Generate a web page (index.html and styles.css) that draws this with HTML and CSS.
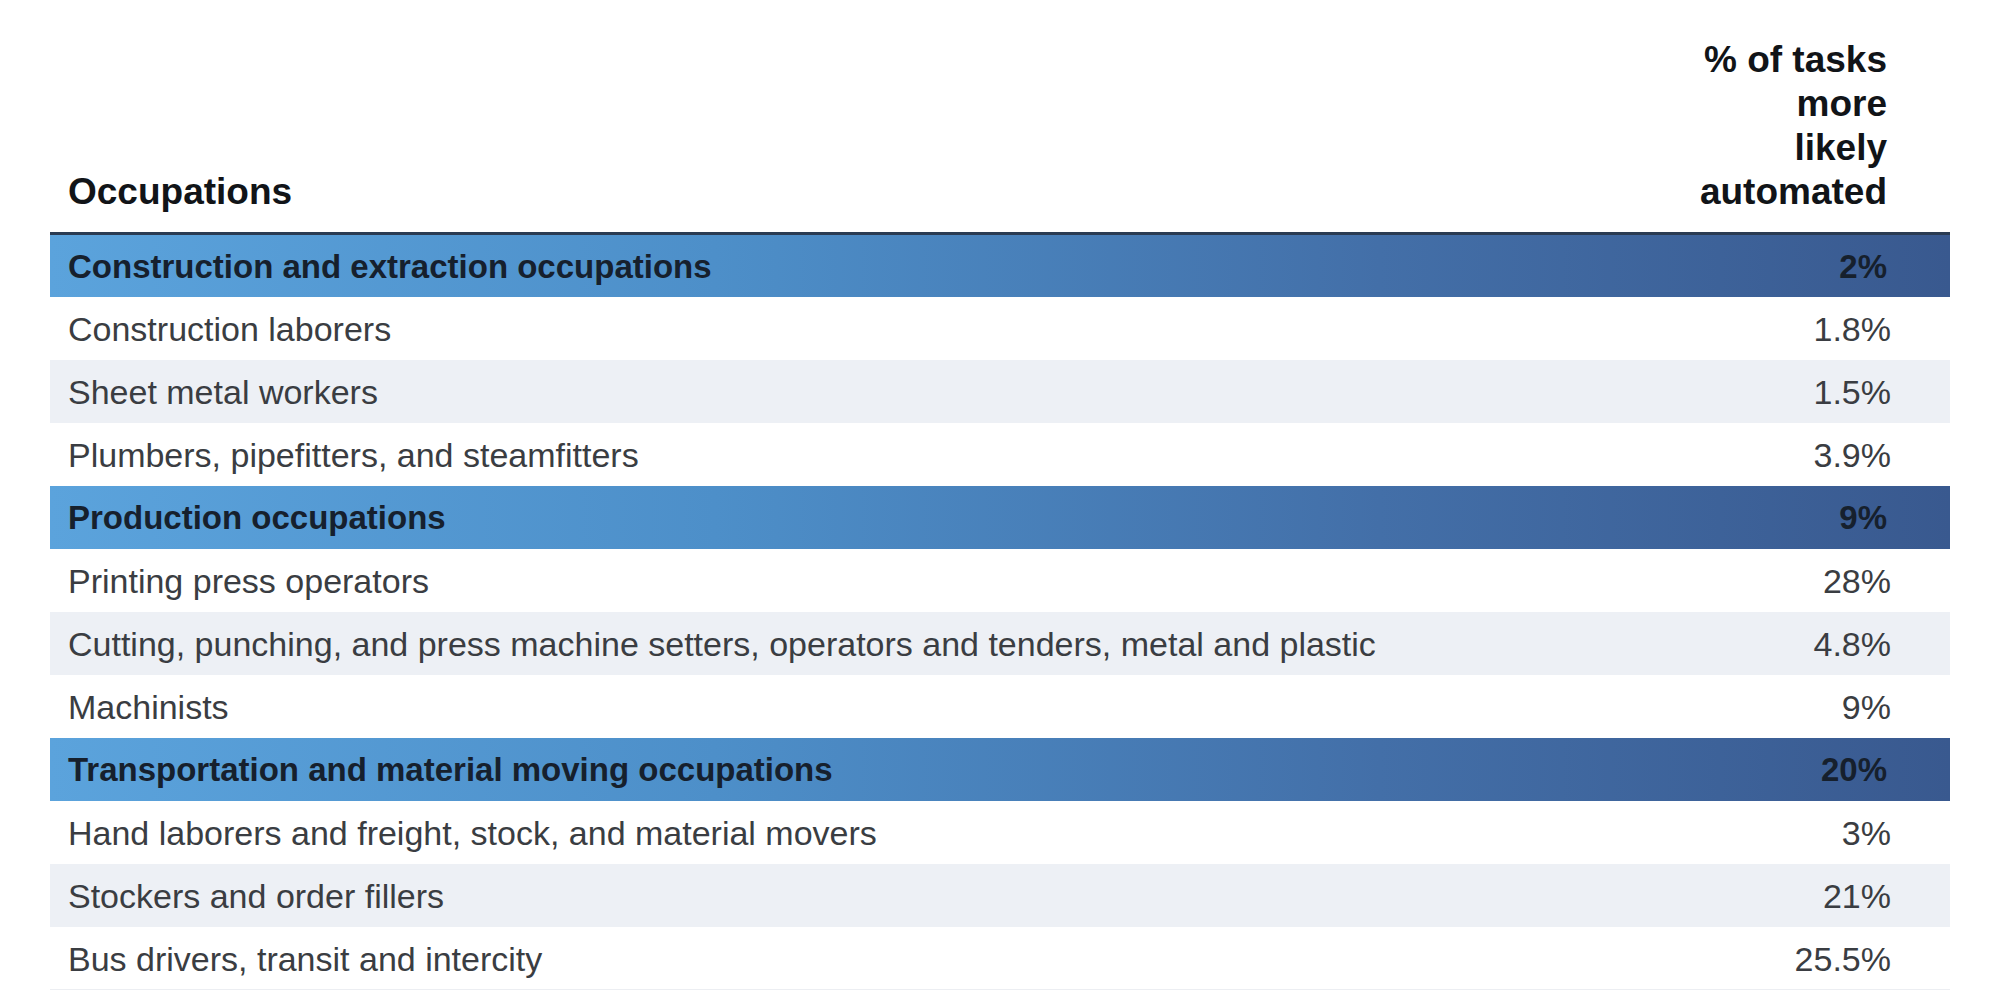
FILE: index.html
```html
<!DOCTYPE html>
<html lang="en">
<head>
<meta charset="utf-8">
<title>Occupations</title>
<link rel="stylesheet" href="styles.css">
</head>
<body>
<main class="page">
  <table class="occ-table">
    <thead>
      <tr>
        <th class="col-name">Occupations</th>
        <th class="col-pct"><span class="pct-head">% of tasks more likely automated</span></th>
      </tr>
    </thead>
    <tbody>
      <tr class="group"><td>Construction and extraction occupations</td><td class="num">2%</td></tr>
      <tr><td>Construction laborers</td><td class="num">1.8%</td></tr>
      <tr class="alt"><td>Sheet metal workers</td><td class="num">1.5%</td></tr>
      <tr><td>Plumbers, pipefitters, and steamfitters</td><td class="num">3.9%</td></tr>
      <tr class="group"><td>Production occupations</td><td class="num">9%</td></tr>
      <tr><td>Printing press operators</td><td class="num">28%</td></tr>
      <tr class="alt"><td>Cutting, punching, and press machine setters, operators and tenders, metal and plastic</td><td class="num">4.8%</td></tr>
      <tr><td>Machinists</td><td class="num">9%</td></tr>
      <tr class="group"><td>Transportation and material moving occupations</td><td class="num">20%</td></tr>
      <tr><td>Hand laborers and freight, stock, and material movers</td><td class="num">3%</td></tr>
      <tr class="alt"><td>Stockers and order fillers</td><td class="num">21%</td></tr>
      <tr class="last"><td>Bus drivers, transit and intercity</td><td class="num">25.5%</td></tr>
    </tbody>
  </table>
</main>
</body>
</html>
```

FILE: styles.css
```css
html, body {
  margin: 0;
  padding: 0;
  background: #ffffff;
}

body {
  font-family: "Liberation Sans", Arial, Helvetica, sans-serif;
  color: #3a3d42;
}

.page {
  padding: 38px 44px 0 50px;
}

.occ-table {
  width: 100%;
  border-collapse: collapse;
  font-size: 34px;
}

.occ-table th {
  font-size: 37px;
  font-weight: 700;
  color: #111418;
  vertical-align: bottom;
  line-height: 44px;
  padding: 0 0 18px 18px;
  border-bottom: 3px solid #2a3b52;
}

.col-name {
  text-align: left;
}

.col-pct {
  text-align: right;
  width: 200px;
  padding-right: 63px !important;
}

.pct-head {
  display: inline-block;
  width: 190px;
}

.occ-table td {
  height: 63px;
  padding: 2px 0 0 18px;
  box-sizing: border-box;
  vertical-align: middle;
  line-height: 38px;
}

.occ-table td.num {
  text-align: right;
  padding-right: 59px;
}

.alt td {
  background: #edf0f5;
}

.group td {
  font-size: 33px;
  font-weight: 700;
  color: #16202d;
}

.occ-table .group td.num {
  padding-right: 63px;
}

.group {
  background: linear-gradient(to right, #5ba3dc 0%, #4d8fc9 35%, #436fa8 70%, #39598f 100%);
}

.last td {
  border-bottom: 1px solid #eceef2;
}
```
